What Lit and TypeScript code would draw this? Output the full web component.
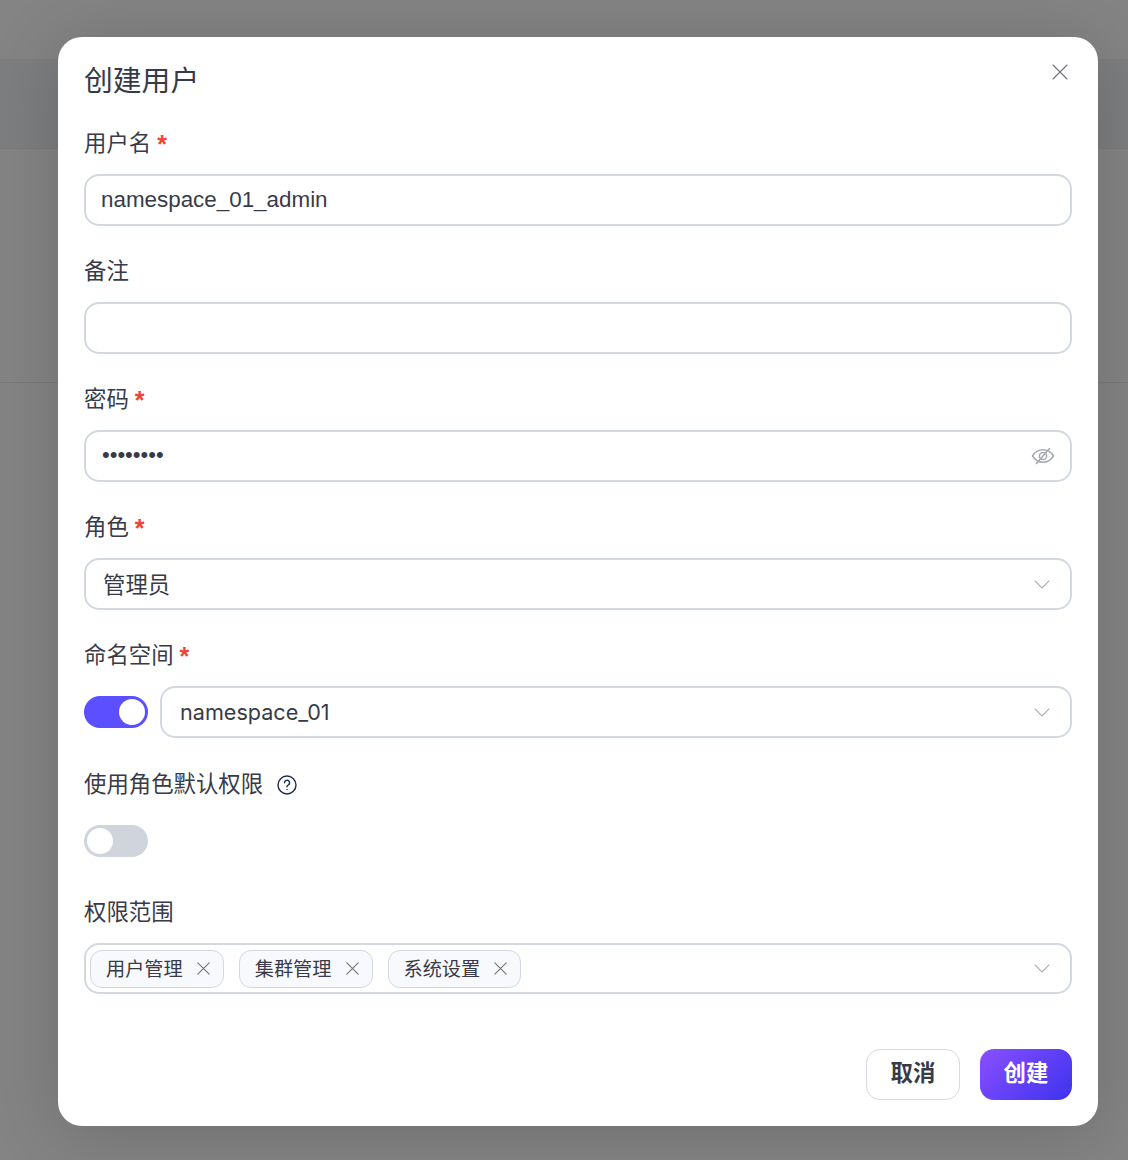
import { LitElement, html, css } from "lit";
import { customElement } from "lit/decorators.js";

const X = (size: number, sw = 1.1) => html`<svg width=${size} height=${size} viewBox="0 0 16 16" fill="none" stroke="currentColor" stroke-width=${sw} stroke-linecap="round"><path d="M1 1 15 15M15 1 1 15"/></svg>`;
const chevron = html`<svg class="chev" width="16" height="9" viewBox="0 0 16 9" fill="none" stroke="#a9acb4" stroke-width="1.1"><path d="M.7.7 8 8 15.300.7"/></svg>`;

@customElement("app-root")
export class AppRoot extends LitElement {
  static styles = css`
    :host { display: block; width: 1128px; height: 1160px; position: relative; overflow: hidden; background: #848484;
      font-family: "Liberation Sans", "Noto Sans CJK SC", sans-serif; color: #383b47; }
    .page-bar { margin-top: 59px; height: 89px; background: #7d7e80; border-bottom: 1px solid #7a7b7d; }
    .page-line { margin-top: 233px; height: 1px; background: #7b7b7b; }
    .modal { position: absolute; left: 58px; top: 37px; width: 1040px; height: 1089px; box-sizing: border-box; background: #fff; border-radius: 24px; padding: 0 26px; display: flex; flex-direction: column; box-shadow: 0 8px 70px rgba(0,0,0,.17); }
    .head { height: 90px; flex: none; display: flex; align-items: flex-start; justify-content: space-between; }
    h2 { margin: 26px 0 0; font-size: 28.8px; line-height: 36px; font-weight: 400; }
    .close { color: #70737c; margin: 27px 4px 0 0; }
    .field { margin-bottom: 29px; }
    .ns { margin-bottom: 30px; }
    .label { height: 32px; box-sizing: border-box; padding-top: 2px; line-height: 30px; font-size: 22.4px; margin-bottom: 15px; display: flex; align-items: center; white-space: nowrap; }
    .star { color: #f04438; margin-left: 6px; font-size: 25px; font-weight: 700; }
    .input { height: 52px; box-sizing: border-box; border: 2px solid #d3d7e1; border-radius: 15px; display: flex; align-items: center; padding: 0 15px; font-size: 22.4px; background: #fff; }
    .select { padding-left: 17px; justify-content: space-between; padding-right: 20px; }
    .sel-cn { padding-bottom: 3px; }
    .sel-en { font-family: Inter, sans-serif; font-size: 21.6px; margin-left: 1px; }
    .pw { justify-content: space-between; padding-right: 16px; padding-left: 16px; }
    .pw svg { margin-right: -1px; }
    .dots { font-size: 22px; color: #383b47; transform: translateY(-1px); }
    .row { display: flex; align-items: center; gap: 12px; }
    .row .input { flex: 1; }
    .toggle { width: 64px; height: 32px; border-radius: 16px; box-sizing: border-box; padding: 3px; flex: none; display: flex; background: #d0d5dd; }
    .toggle.on { background: #5b4fff; justify-content: flex-end; }
    .knob { width: 26px; height: 26px; border-radius: 50%; background: #fff; }
    .help { margin-left: 14px; }
    .perm { margin-bottom: 39px; }
    .perm .label { margin-bottom: 25px; }
    .scope .input { height: 51px; padding: 0 20px 0 4px; }
    .tags { display: flex; gap: 15px; flex: 1; }
    .tag { height: 38px; box-sizing: border-box; border: 1.5px solid #d3d7e1; border-radius: 12px; background: #f8f9fd; display: flex; align-items: center; gap: 14px; padding: 0 13px 0 15px; font-size: 19.2px; }
    .tag span { padding-bottom: 2px; }
    .tag svg { color: #6f727b; }
    .foot { margin-top: auto; margin-bottom: 26px; display: flex; justify-content: flex-end; gap: 20px; }
    button { height: 51px; box-sizing: border-box; border-radius: 14px; font: inherit; font-size: 22.4px; font-weight: 700; padding: 0 0 7px; }
    .cancel { width: 94px; background: #fff; border: 1.5px solid #d6d8e2; color: #383b47; }
    .ok { width: 92px; border: 0; color: #fff; background: linear-gradient(135deg, #8a4fff, #3d33ee); }
  `;

  render() {
    return html`
      <div class="page-bar"></div>
      <div class="page-line"></div>
      <div class="modal">
        <div class="head"><h2>创建用户</h2><span class="close">${X(16)}</span></div>
        <div class="field">
          <div class="label">用户名<span class="star">*</span></div>
          <div class="input">namespace_01_admin</div>
        </div>
        <div class="field">
          <div class="label">备注</div>
          <div class="input"></div>
        </div>
        <div class="field">
          <div class="label">密码<span class="star">*</span></div>
          <div class="input pw"><span class="dots">••••••••</span>
            <svg width="24" height="20" viewBox="0 0 24 20" fill="none" stroke="#a5a8af" stroke-width="1.5" stroke-linecap="round">
              <path d="M1.500 10C4 6 7.500 3.800 12 3.800S20 6 22.500 10C20 14 16.500 16.200 12 16.200S4 14 1.500 10Z"/>
              <circle cx="12" cy="10" r="3.600"/>
              <path d="M18.500 2.500 5.500 17.500"/>
            </svg>
          </div>
        </div>
        <div class="field">
          <div class="label">角色<span class="star">*</span></div>
          <div class="input select"><span class="sel-cn">管理员</span>${chevron}</div>
        </div>
        <div class="field ns">
          <div class="label">命名空间<span class="star">*</span></div>
          <div class="row"><span class="toggle on"><span class="knob"></span></span>
            <div class="input select"><span class="sel-en">namespace_01</span>${chevron}</div></div>
        </div>
        <div class="field perm">
          <div class="label">使用角色默认权限
            <svg class="help" width="20" height="20" viewBox="0 0 20 20" fill="none" stroke="#1e2a52" stroke-width="1.400"><circle cx="10" cy="10" r="9"/><path stroke-linecap="round" d="M7.500 7.800a2.500 2.500 0 1 1 3.700 2.200c-.8.5-1.200 1-1.200 1.800"/><path stroke-linecap="round" d="M10 14.500v.1"/></svg>
          </div>
          <span class="toggle"><span class="knob"></span></span>
        </div>
        <div class="scope">
          <div class="label">权限范围</div>
          <div class="input">
            <div class="tags">
              ${["用户管理", "集群管理", "系统设置"].map((t) => html`<div class="tag"><span>${t}</span>${X(13, 1.3)}</div>`)}
            </div>
            ${chevron}
          </div>
        </div>
        <div class="foot"><button class="cancel">取消</button><button class="ok">创建</button></div>
      </div>
    `;
  }
}
